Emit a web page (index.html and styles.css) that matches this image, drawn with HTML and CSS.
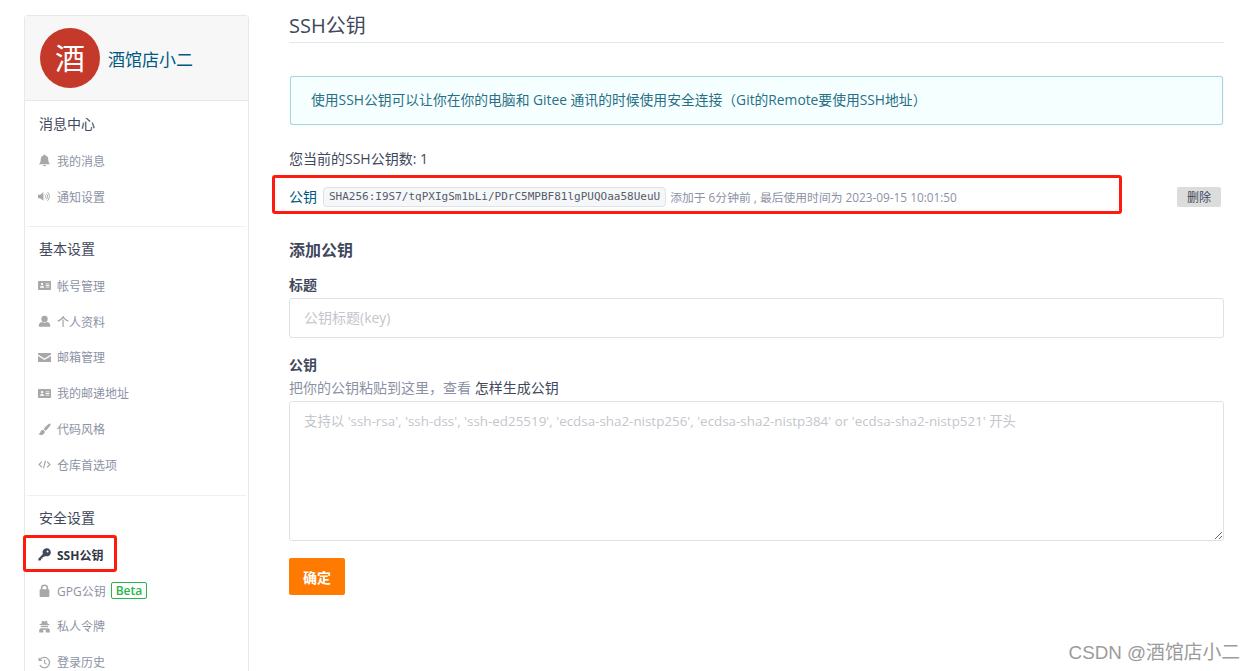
FILE: index.html
```html
<!DOCTYPE html>
<html lang="zh-CN">
<head>
    <meta charset="UTF-8">
    <title>SSH公钥</title>
    <link rel="stylesheet" href="styles.css">
</head>
<body>
    <svg class="sprite" xmlns="http://www.w3.org/2000/svg">
        <symbol id="i-bell" viewBox="0 0 16 16"><path d="M8 0.6a1.2 1.2 0 0 1 1.2 1.3C11.5 2.400 12.500 4.200 12.600 6.500c.1 3 .9 4.600 2.200 6H1.200c1.300-1.400 2.100-3 2.200-6C3.500 4.200 4.500 2.400 6.800 1.900A1.200 1.200 0 0 1 8 .6zM6.200 13.400h3.600a1.800 1.800 0 0 1-3.600 0z"/></symbol>
        <symbol id="i-volume" viewBox="0 0 18 16"><path d="M0 5.500h3L7.500 2v12L3 10.500H0z"/><path d="M9.500 5.500a3.200 3.200 0 0 1 0 5M11.300 3.800a5.600 5.600 0 0 1 0 8.400M13.200 2a8.200 8.200 0 0 1 0 12" fill="none" stroke="currentColor" stroke-width="1.300"/></symbol>
        <symbol id="i-card" viewBox="0 0 16 16"><path fill-rule="evenodd" d="M1 2.500h14a1 1 0 0 1 1 1v9a1 1 0 0 1-1 1H1a1 1 0 0 1-1-1v-9a1 1 0 0 1 1-1zM5 4.800a1.500 1.500 0 1 0 0 3 1.500 1.500 0 0 0 0-3zM2.300 10.800c0-1.500 1.100-2.300 2.700-2.300s2.700.8 2.700 2.300zM9.500 5.500v1h4.500v-1zM9.500 7.500v1h4.500v-1zM9.500 9.500v1h4.500v-1z"/></symbol>
        <symbol id="i-user" viewBox="0 0 16 16"><circle cx="8" cy="4.800" r="3.900"/><path d="M1 14.500v-1.800c0-2.300 1.800-4 4.200-4 .8.500 1.800.8 2.800.8s2-.3 2.800-.8c2.400 0 4.200 1.700 4.200 4v1.800z"/></symbol>
        <symbol id="i-mail" viewBox="0 0 16 16"><path d="M0 2.500h16v1.800L8 9.100 0 4.300z"/><path d="M0 6.300l8 4.800 8-4.800V13.500H0z"/></symbol>
        <symbol id="i-brush" viewBox="0 0 16 16"><path d="M15.200.8c.7.600.2 1.800-.8 3.100-1.400 1.900-3.500 4.400-5.200 5.700L6.900 7.500C8.300 5.600 10.800 3 12.700 1.500 13.800.7 14.700.3 15.200.8z"/><path d="M6.200 8.300l2.300 2.100c-.2 2.600-2 4.300-4.500 4.300-1.300 0-2.700-.5-3.400-1.600 1.400-.1 2-.7 2.300-1.800.4-1.600 1.800-3 3.300-3z"/></symbol>
        <symbol id="i-code" viewBox="0 0 18 16"><path d="M5.500 4L1.500 8l4 4M12.500 4l4 4-4 4M10.400 2.500L7.600 13.500" fill="none" stroke="currentColor" stroke-width="1.700"/></symbol>
        <symbol id="i-key" viewBox="0 0 16 16"><path fill-rule="evenodd" d="M10.700 .4a4.900 4.900 0 1 1-2 9.300L7.300 11.100H5.600V12.800H3.900V14.500L2.900 15.500H.4V13.100L6.100 7.300a4.900 4.900 0 0 1 4.600-6.900zM11.800 3a1.200 1.200 0 1 0 0 2.400 1.200 1.200 0 0 0 0-2.400z"/></symbol>
        <symbol id="i-lock" viewBox="0 0 16 16"><path fill-rule="evenodd" d="M3.500 6.500V5a4.500 4.500 0 0 1 9 0v1.500h.5a1 1 0 0 1 1 1V15a1 1 0 0 1-1 1H3a1 1 0 0 1-1-1V7.500a1 1 0 0 1 1-1zM5.500 6.500h5V5a2.500 2.500 0 0 0-5 0z"/></symbol>
        <symbol id="i-secret" viewBox="0 0 16 16"><path d="M5 1l3 .8L11 1l1 4h2v1.200H2V5h2z"/><path d="M3.500 7h9v1.800h-9z"/><path d="M1.500 15.500V12.500c0-1 .8-2.500 2.500-2.500h8c1.700 0 2.500 1.500 2.500 2.500v3H9.500V12h-3v3.500z"/></symbol>
        <symbol id="i-history" viewBox="0 0 16 16"><path d="M2.700 4.500A6.300 6.300 0 1 1 2.300 11" fill="none" stroke="currentColor" stroke-width="1.600"/><path d="M.6 1.600L5.500 6H.6z"/><path d="M7.400 4.500h1.400v3.700l2.400 1.500-.7 1.100-3.100-1.900z"/></symbol>
    </svg>

    <div class="page">
        <aside class="sidebar">
            <div class="profile">
                <div class="avatar">酒</div>
                <a class="profile-name" href="#">酒馆店小二</a>
            </div>

            <div class="nav-group">
                <h4>消息中心</h4>
                <a class="nav-item" href="#"><svg class="icon"><use href="#i-bell"/></svg>我的消息</a>
                <a class="nav-item" href="#"><svg class="icon"><use href="#i-volume"/></svg>通知设置</a>
            </div>

            <div class="nav-group">
                <h4>基本设置</h4>
                <a class="nav-item" href="#"><svg class="icon"><use href="#i-card"/></svg>帐号管理</a>
                <a class="nav-item" href="#"><svg class="icon"><use href="#i-user"/></svg>个人资料</a>
                <a class="nav-item" href="#"><svg class="icon"><use href="#i-mail"/></svg>邮箱管理</a>
                <a class="nav-item" href="#"><svg class="icon"><use href="#i-card"/></svg>我的邮递地址</a>
                <a class="nav-item" href="#"><svg class="icon"><use href="#i-brush"/></svg>代码风格</a>
                <a class="nav-item" href="#"><svg class="icon"><use href="#i-code"/></svg>仓库首选项</a>
            </div>

            <div class="nav-group">
                <h4>安全设置</h4>
                <a class="nav-item active" href="#"><svg class="icon"><use href="#i-key"/></svg>SSH公钥</a>
                <a class="nav-item" href="#"><svg class="icon"><use href="#i-lock"/></svg>GPG公钥<span class="beta">Beta</span></a>
                <a class="nav-item" href="#"><svg class="icon"><use href="#i-secret"/></svg>私人令牌</a>
                <a class="nav-item" href="#"><svg class="icon"><use href="#i-history"/></svg>登录历史</a>
            </div>
        </aside>

        <main class="content">
            <h2 class="page-title">SSH公钥</h2>

            <div class="alert">使用SSH公钥可以让你在你的电脑和 Gitee 通讯的时候使用安全连接（Git的Remote要使用SSH地址）</div>

            <p class="key-count">您当前的SSH公钥数: 1</p>

            <div class="key-row">
                <a class="key-name" href="#">公钥</a>
                <code class="fingerprint">SHA256:I9S7/tqPXIgSm1bLi/PDrC5MPBF81lgPUQOaa58UeuU</code>
                <span class="key-meta">添加于 6分钟前 , 最后使用时间为 2023-09-15 10:01:50</span>
                <button class="btn-delete" type="button">删除</button>
            </div>

            <h3 class="form-title">添加公钥</h3>

            <form class="key-form">
                <label for="keyTitle">标题</label>
                <input id="keyTitle" type="text" placeholder="公钥标题(key)">

                <label class="label-key" for="keyBody">公钥</label>
                <p class="help">把你的公钥粘贴到这里，查看 <a href="#">怎样生成公钥</a></p>
                <textarea id="keyBody" placeholder="支持以 'ssh-rsa', 'ssh-dss', 'ssh-ed25519', 'ecdsa-sha2-nistp256', 'ecdsa-sha2-nistp384' or 'ecdsa-sha2-nistp521' 开头"></textarea>

                <button class="btn-submit" type="button">确定</button>
            </form>
        </main>
    </div>

    <div class="watermark">CSDN @酒馆店小二</div>
</body>
</html>
```

FILE: styles.css
```css
html, body {
    height: 100%;
    margin: 0;
    overflow: hidden;
}
body {
    background: #fff;
    color: #40485b;
    font-family: "Open Sans", "Noto Sans CJK SC", sans-serif;
    font-size: 14px;
}
a {
    text-decoration: none;
}
.sprite {
    display: none;
}
.page {
    display: flex;
    gap: 40px;
    height: 100%;
    box-sizing: border-box;
    padding: 15px 0 0 24px;
}

/* sidebar */
.sidebar {
    flex: none;
    box-sizing: border-box;
    width: 225px;
    height: 100%;
    border: 1px solid #e3e9ed;
    border-bottom: none;
    border-radius: 4px 4px 0 0;
}
.profile {
    display: flex;
    align-items: center;
    gap: 8px;
    box-sizing: border-box;
    height: 85px;
    padding-left: 15px;
    background: #f7f7f7;
    border-bottom: 1px solid #e3e9ed;
}
.avatar {
    width: 60px;
    height: 60px;
    border-radius: 50%;
    background: #c5392a;
    color: #fff;
    font-size: 30px;
    line-height: 60px;
    text-align: center;
}
.profile-name {
    color: #005980;
    font-size: 17px;
}
.nav-group {
    margin: 0 2px;
    padding: 11px 12px 11.4px;
    border-bottom: 1px solid #eef1f3;
}
.nav-group + .nav-group {
    padding: 10px 12px 12.2px;
}
.nav-group:last-child {
    border-bottom: none;
}
.nav-group h4 {
    margin: 0;
    height: 24px;
    color: #40485b;
    font-size: 14px;
    font-weight: 400;
    line-height: 24px;
}
.nav-item {
    position: relative;
    display: flex;
    align-items: center;
    height: 35.8px;
    color: #8c92a4;
    font-size: 12px;
}
.nav-group h4 + .nav-item {
    margin-top: 7px;
}
.nav-item .icon {
    flex: none;
    width: 13px;
    height: 13px;
    margin: 0 6px 0 -1px;
    fill: #a8a8a8;
    color: #a8a8a8;
}
.nav-item.active {
    color: #303643;
    font-weight: 700;
}
.nav-item.active .icon {
    fill: #40485b;
    color: #40485b;
}
/* red annotation drawn on the screenshot */
.nav-item.active::after {
    content: "";
    position: absolute;
    left: -16px;
    top: -2px;
    width: 88px;
    height: 31px;
    border: 3px solid #ff1a0e;
    border-radius: 3px;
}
.beta {
    margin-left: 5px;
    padding: 0 4px;
    border: 1px solid #28b44b;
    border-radius: 2px;
    color: #28b44b;
    font-size: 12px;
    font-weight: 600;
    line-height: 15px;
}

/* main column */
.content {
    flex: none;
    width: 935px;
}
.page-title {
    margin: 0;
    height: 27px;
    border-bottom: 1px solid #e3e6ea;
    color: #40485b;
    font-size: 20px;
    font-weight: 400;
    line-height: 22px;
}
.alert {
    box-sizing: border-box;
    height: 49px;
    margin: 33px 1px 0;
    padding-left: 20px;
    background: #f6ffff;
    border: 1px solid #a9d5de;
    border-radius: 3px;
    box-shadow: 0 0 1px #a9d5de;
    color: #276f86;
    font-size: 13.8px;
    line-height: 45px;
}
.key-count {
    margin: 24px 0 0;
    color: #40485b;
    font-size: 14px;
    line-height: 20px;
}
.key-row {
    position: relative;
    display: flex;
    align-items: center;
    height: 20px;
    margin-top: 18px;
}
.key-row::after {
    content: "";
    position: absolute;
    left: -17px;
    top: -12px;
    width: 844px;
    height: 33px;
    border: 3px solid #ff1a0e;
    border-radius: 3px;
}
.key-name {
    margin: 0 6px 2px 0;
    color: #005980;
    font-size: 14px;
}
.fingerprint {
    box-sizing: border-box;
    height: 20px;
    padding: 0 5px;
    background: #f6f7f9;
    border: 1px solid #dfe1e8;
    border-radius: 4px;
    color: #555b6b;
    font-family: "DejaVu Sans Mono", monospace;
    font-size: 11px;
    line-height: 18px;
}
.key-meta {
    margin: 0 0 2px 4px;
    color: #8c92a4;
    font-size: 11.8px;
}
.btn-delete {
    position: absolute;
    right: 3px;
    top: 0;
    width: 44px;
    height: 20px;
    padding: 0;
    background: #dcdcdc;
    border: none;
    border-radius: 2px;
    color: #40485b;
    font-family: inherit;
    font-size: 12px;
}
.form-title {
    margin: 31px 0 0;
    color: #40485b;
    font-size: 16px;
    font-weight: 700;
    line-height: 24px;
}

/* form */
.key-form label {
    display: block;
    margin-top: 13px;
    color: #40485b;
    font-size: 14px;
    font-weight: 700;
    line-height: 20px;
}
.key-form label.label-key {
    margin-top: 17px;
}
.key-form input, .key-form textarea {
    display: block;
    box-sizing: border-box;
    width: 100%;
    border: 1px solid #dfe1e8;
    border-radius: 3px;
    outline: none;
    padding: 0 14px;
    color: #40485b;
    font-family: inherit;
}
.key-form input {
    height: 40px;
    margin-top: 3px;
    padding-bottom: 2px;
    font-size: 14px;
}
.key-form textarea {
    height: 140px;
    margin-top: 3px;
    padding-top: 8px;
    font-size: 13.4px;
}
.key-form ::placeholder {
    color: #c4c6cc;
    opacity: 1;
}
.help {
    margin: 3px 0 0;
    color: #8c92a4;
    font-size: 14px;
    line-height: 20px;
}
.help a {
    color: #40485b;
}
.btn-submit {
    display: block;
    width: 56px;
    height: 37px;
    margin-top: 17px;
    padding: 0;
    background: #ff7a00;
    border: none;
    border-radius: 2px;
    color: #fff;
    font-family: inherit;
    font-size: 14px;
    font-weight: 700;
}

.watermark {
    position: absolute;
    right: 15px;
    bottom: 5px;
    color: #9b9b9b;
    font-family: "Liberation Sans", "Noto Sans CJK SC", sans-serif;
    font-size: 18.8px;
    line-height: 26px;
}
```
